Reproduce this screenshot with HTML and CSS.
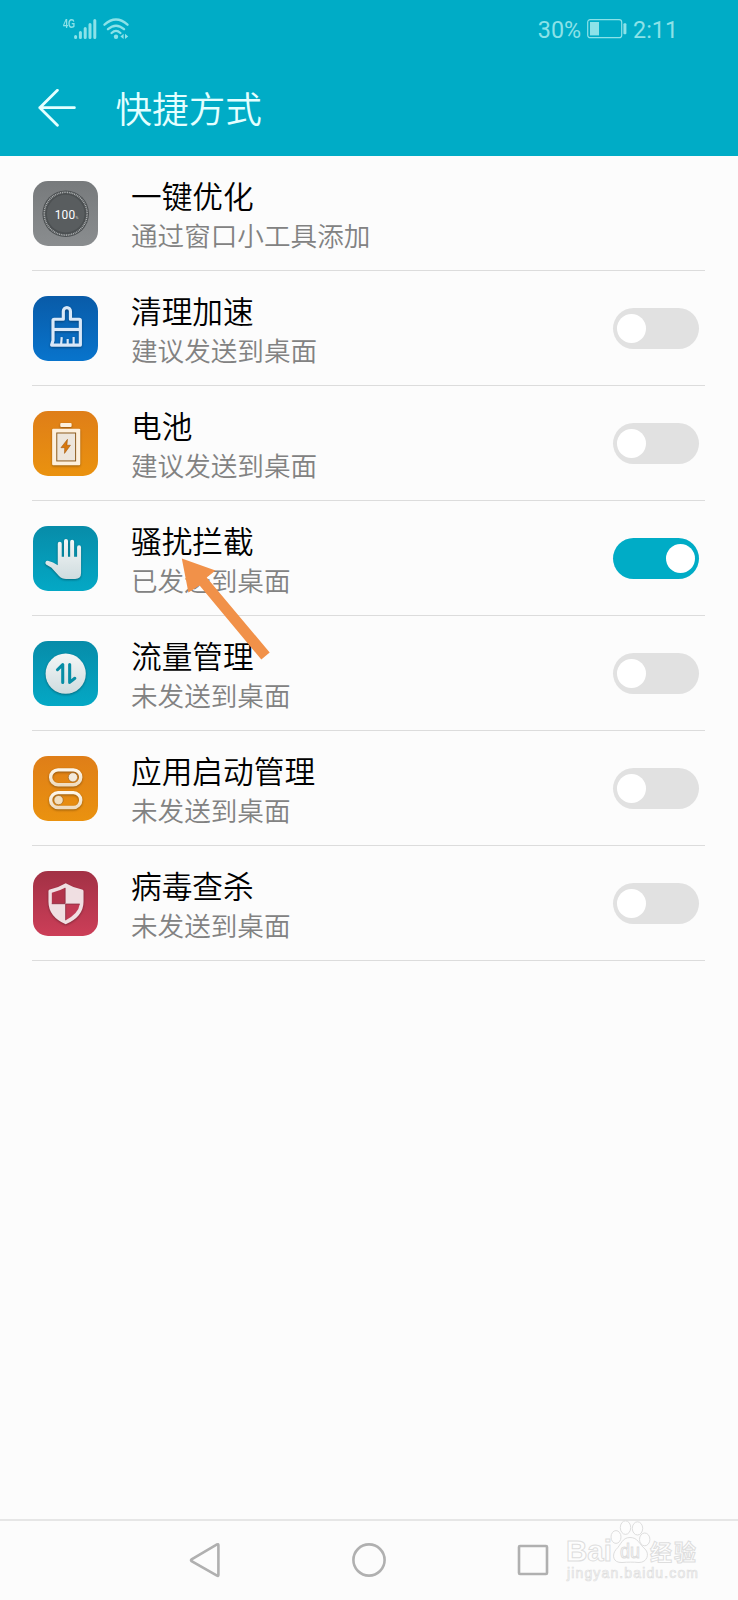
FILE: index.html
```html
<!DOCTYPE html>
<html lang="zh-CN">

<head>
    <meta charset="UTF-8" />
    <meta name="viewport" content="width=device-width, initial-scale=1.0" />
    <title>快捷方式</title>
    <link rel="stylesheet" href="styles.css">
</head>

<body>

    <header class="header">
        <div class="status-bar">
            <div class="status-left">
                <span class="network">4G</span>
                <svg class="signal" width="23" height="22" viewBox="0 0 23 22">
                    <path d="M1.6 18.4V19.4M6.4 14.5V19.4M11.2 10.5V19.4M16 6.5V19.4M20.8 2.5V19.4" fill="none" stroke="currentColor" stroke-width="3" stroke-linecap="round" />
                </svg>
                <svg class="wifi" width="26" height="22" viewBox="0 0 26 22">
                    <path d="M1.5 6.7Q13-3.6 24.5 6.7M5 11.2Q13 4.2 21 11.2M8.6 15Q13 10.8 17.4 15" fill="none" stroke="currentColor" stroke-width="2.3" stroke-linecap="round" />
                    <circle cx="13" cy="18.8" r="2.2" fill="currentColor" />
                    <path d="M20.6 15.8V21L17.4 18.4zM22 15.8V21L25.2 18.4z" fill="currentColor" />
                </svg>
            </div>
            <div class="status-right">
                <span>30%</span>
                <svg class="battery" width="41" height="20" viewBox="0 0 41 20">
                    <rect x="0.7" y="0.7" width="34" height="18" rx="2.5" fill="none" stroke="currentColor" stroke-width="1.2" />
                    <rect x="3" y="3" width="9" height="13.4" fill="currentColor" />
                    <rect x="36.4" y="4.2" width="3" height="11" rx="1" fill="currentColor" />
                </svg>
                <span>2:11</span>
            </div>
        </div>
        <div class="title-bar">
            <svg class="back" width="38" height="38" viewBox="0 0 38 38">
                <path d="M19.4 1.3L1.8 18.7L19.4 36.2M1.8 18.7H36.4" fill="none" stroke="currentColor" stroke-width="2.8" stroke-linecap="round" stroke-linejoin="round" />
            </svg>
            <h1>快捷方式</h1>
        </div>
    </header>

    <svg class="defs" width="0" height="0">
        <defs>
            <linearGradient id="silver" x1="0" y1="0" x2="0" y2="1">
                <stop offset="0" stop-color="#f4f6f6" />
                <stop offset="1" stop-color="#cfdcdf" />
            </linearGradient>
            <linearGradient id="cream" x1="0" y1="0" x2="0" y2="1">
                <stop offset="0" stop-color="#fdf6ea" />
                <stop offset="1" stop-color="#efdcc0" />
            </linearGradient>
        </defs>
    </svg>

    <main class="list">
        <div class="row">
            <svg class="icon gray" viewBox="0 0 66 66">
                <circle cx="33" cy="33" r="23.5" fill="#4c5052" />
                <circle cx="33" cy="33" r="19" fill="#595d5f" />
                <circle cx="33" cy="33" r="21.6" fill="none" stroke="#b0b3b4" stroke-width="1.6" stroke-dasharray="1 0.8" />
                <text x="22" y="38" class="score" textLength="20.5">100</text>
                <text x="43" y="38" class="score-unit">%</text>
            </svg>
            <div class="info">
                <div class="name">一键优化</div>
                <div class="desc">通过窗口小工具添加</div>
            </div>
        </div>

        <div class="row">
            <svg class="icon blue" viewBox="0 0 66 66">
                <g class="raised" fill="none" stroke="#d9e8f8" stroke-width="3.2" stroke-linejoin="round">
                    <path d="M30.6 23.5V15.4A3.6 3.6 0 0 1 37.8 15.4V23.5H46.6Q47.8 23.5 47.8 24.7V49.5H18.8L20.2 45V24.7Q20.2 23.5 21.4 23.5Z" />
                    <path d="M20.2 33.8H47.8" />
                    <path d="M29 41.5L28.4 48.5M35 43.5V48.5M41 41.5V48.5" stroke-width="2.2" />
                </g>
            </svg>
            <div class="info">
                <div class="name">清理加速</div>
                <div class="desc">建议发送到桌面</div>
            </div>
            <div class="switch"></div>
        </div>

        <div class="row">
            <svg class="icon orange" viewBox="0 0 66 66">
                <g class="raised">
                    <rect x="27.5" y="12" width="11.5" height="4.2" rx="1" fill="#fdf0dd" />
                    <rect x="19.3" y="17.8" width="28.4" height="37" rx="1.2" fill="#fdf0dd" />
                </g>
                <rect x="24" y="22.2" width="19" height="28.2" fill="#ede6dc" stroke="#8b5a1c" stroke-width="1" />
                <path d="M34.8 28.6L28.2 37H32L31.8 42.8L37.8 34.6H34.2Z" fill="#d9780c" stroke="#a05a12" stroke-width="0.6" />
            </svg>
            <div class="info">
                <div class="name">电池</div>
                <div class="desc">建议发送到桌面</div>
            </div>
            <div class="switch"></div>
        </div>

        <div class="row">
            <svg class="icon teal" viewBox="0 0 66 66">
                <path class="raised" fill="url(#silver)" d="M25 39.5V18A2 2 0 0 1 29 18V31H31.300V15A2 2 0 0 1 35.3 15V31H37.5V16A2 2 0 0 1 41.5 16V31H44.5V21.4A2 2 0 0 1 48.500 21.4V47.5Q48.5 53.5 42.5 53.5H33.5Q29 53.5 26 50.2L18.7 42.2L13.2 38.9A2.2 2.2 0 0 1 15 35.1Q20.5 36.2 25 39.5Z" />
            </svg>
            <div class="info">
                <div class="name">骚扰拦截</div>
                <div class="desc">已发送到桌面</div>
            </div>
            <div class="switch on"></div>
        </div>

        <div class="row">
            <svg class="icon teal" viewBox="0 0 66 66">
                <circle class="raised" cx="33" cy="33" r="20.3" fill="url(#silver)" />
                <path d="M24.7 29L30 23.8V41.8M37 23.8V41.8L42.2 37.6" fill="none" stroke="#078da5" stroke-width="3.1" stroke-linecap="round" stroke-linejoin="round" />
            </svg>
            <div class="info">
                <div class="name">流量管理</div>
                <div class="desc">未发送到桌面</div>
            </div>
            <div class="switch"></div>
        </div>

        <div class="row">
            <svg class="icon orange" viewBox="0 0 66 66">
                <g class="raised" fill="none" stroke="url(#cream)" stroke-width="3.4">
                    <rect x="17.8" y="14" width="30.4" height="15" rx="7.5" />
                    <rect x="17.8" y="37" width="30.4" height="15" rx="7.5" />
                </g>
                <circle cx="40.3" cy="21.5" r="4.7" fill="#f3eadc" stroke="#9c6420" stroke-width="0.7" />
                <circle cx="25.8" cy="44.5" r="4.7" fill="#f3dfbe" stroke="#9c6420" stroke-width="0.7" />
            </svg>
            <div class="info">
                <div class="name">应用启动管理</div>
                <div class="desc">未发送到桌面</div>
            </div>
            <div class="switch"></div>
        </div>

        <div class="row">
            <svg class="icon red" viewBox="0 0 66 66">
                <path class="raised" fill="#f0dfe2" d="M33 12.3Q41 17 49.5 18.7Q51 19 51 20.5V31Q51 46 33 53.8Q15.6 46 15.6 31V20.5Q15.6 19 17 18.7Q25 17 33 12.3Z" />
                <path d="M32.4 17V33H19V22Q27 20 32.4 17Z" fill="#b2344b" />
                <path d="M33 33.4H47.2Q46 43 33 49.7Z" fill="#c23a54" />
                <path d="M32.4 17V33H19M47.2 33.4H33V49.7" fill="none" stroke="#8f3045" stroke-width="0.9" />
            </svg>
            <div class="info">
                <div class="name">病毒查杀</div>
                <div class="desc">未发送到桌面</div>
            </div>
            <div class="switch"></div>
        </div>

        <svg class="pointer" width="90" height="104" viewBox="0 0 90 104">
            <path d="M0.8 0.6L34.5 12.4L25.7 19.4L88.7 94.5L80.3 101.6L18.6 27.6L7.4 34.4Z" fill="#f19149" />
        </svg>
    </main>

    <nav class="nav-bar">
        <svg class="nav-icon" width="36" height="36" viewBox="0 0 36 36">
            <path d="M32.4 3V33Q32.4 34.4 31 33.7L5.6 19.2Q4.4 18.2 5.6 17.3L31 2.5Q32.4 1.800 32.4 3Z" />
        </svg>
        <svg class="nav-icon" width="36" height="36" viewBox="0 0 36 36">
            <circle cx="18" cy="18" r="15.6" />
        </svg>
        <svg class="nav-icon" width="36" height="36" viewBox="0 0 36 36">
            <rect x="4" y="4" width="28" height="28" rx="1" />
        </svg>

        <svg class="watermark" width="140" height="66" viewBox="0 0 140 66">
            <g fill="#fdfdfd" stroke="#dedede" stroke-width="1">
                <text x="3" y="41" class="wm-logo" textLength="46" lengthAdjust="spacingAndGlyphs">Bai</text>
                <ellipse cx="53" cy="17" rx="5" ry="6.4" />
                <ellipse cx="62.5" cy="7.6" rx="5.2" ry="6.8" />
                <ellipse cx="74.5" cy="8.4" rx="5.2" ry="6.6" />
                <ellipse cx="81.7" cy="19.4" rx="5.2" ry="6.4" />
                <path d="M67 17.5C75 17.5 76 24 82 29C87 34 84 42.5 76 42.5C70 42 65 42 59 42.5C50 43 48.5 35 53 29.5C58 25 59 17.5 67 17.5Z" />
                <text x="57" y="37.5" class="wm-du" textLength="20" lengthAdjust="spacingAndGlyphs">du</text>
                <text x="87" y="39.5" class="wm-cn" textLength="46">经验</text>
                <text x="4" y="58" class="wm-url" textLength="131">jingyan.baidu.com</text>
            </g>
        </svg>
    </nav>

</body>

</html>
```
FILE: styles.css
```css
* {
    box-sizing: border-box;
}

body {
    display: flex;
    flex-direction: column;
    height: 1600px;
    margin: 0;
    overflow: hidden;
    background-color: #fcfcfc;
    font-family: "Noto Sans CJK SC", sans-serif;
    font-weight: 350;
}

.header {
    height: 156px;
    background-color: #00acc6;
    color: #e4ffff;
}

.status-bar {
    display: flex;
    justify-content: space-between;
    height: 60px;
    padding: 18px 60px 0 63px;
    color: #8ce2e8;
    font-family: Roboto, sans-serif;
    font-weight: 400;
}

.status-left {
    display: flex;
}

.network {
    width: 11px;
    font-family: "Liberation Sans", sans-serif;
    font-size: 13px;
    font-weight: bold;
    line-height: 11px;
    transform: scaleX(0.7);
    transform-origin: left;
}

.signal {
    margin-right: 6px;
}

.status-right {
    display: flex;
    font-size: 23.3px;
    line-height: 24px;
}

.battery {
    margin: 1px 5px 0 6px;
}

.title-bar {
    display: flex;
    align-items: center;
    height: 96px;
    padding: 0 0 0 37.5px;
}

.title-bar h1 {
    margin: -1px 0 0 40px;
    font-size: 36.6px;
    font-weight: 350;
    line-height: 50px;
}

.defs {
    position: absolute;
}

.list {
    position: relative;
    flex: 1;
    padding: 0 33px 0 32px;
}

.row {
    display: flex;
    align-items: center;
    height: 115px;
    border-bottom: 1px solid #dcdcdc;
}

.icon {
    width: 65.4px;
    height: 65.4px;
    margin: 1px 0 0 0.6px;
    border-radius: 15px;
}

.gray {
    background: linear-gradient(#777a7c, #8a8d8f);
}

.blue {
    background: linear-gradient(#095ba8, #0874cc);
}

.orange {
    background: linear-gradient(#df7e18, #ea920f);
}

.teal {
    background: linear-gradient(#078ca9, #04a8c5);
}

.red {
    background: linear-gradient(#a23145, #cc3e58);
}

.raised {
    filter: drop-shadow(0 1px 1px rgba(0, 0, 0, 0.35));
}

.score {
    fill: #fff;
    font-family: Roboto, sans-serif;
    font-size: 12px;
    font-weight: 400;
}

.score-unit {
    fill: #ddd;
    font-family: Roboto, sans-serif;
    font-size: 4px;
}

.info {
    flex: 1;
    margin-left: 33px;
}

.name {
    color: #000;
    font-size: 30.7px;
    line-height: 42px;
}

.desc {
    color: #828282;
    font-size: 26.6px;
    line-height: 37px;
}

.switch {
    display: flex;
    align-items: center;
    width: 86px;
    height: 41px;
    margin-right: 6px;
    padding: 0 4px;
    border-radius: 21px;
    background-color: #e1e1e1;
}

.switch::before {
    content: "";
    width: 29px;
    height: 29px;
    border-radius: 50%;
    background-color: #fff;
}

.switch.on {
    justify-content: flex-end;
    background-color: #00acc6;
}

/* arrow laid over the rows */
.pointer {
    position: absolute;
    top: 402px;
    left: 181px;
}

.nav-bar {
    position: relative;
    display: flex;
    justify-content: space-between;
    height: 81px;
    padding: 21px 187px 0 186px;
    border-top: 2px solid #e6e6e6;
}

.nav-icon {
    fill: none;
    stroke: #b0b0b0;
    stroke-width: 2.6;
}

.watermark {
    position: absolute;
    top: -1px;
    right: 35px;
}

.wm-logo {
    font: bold 29px "Liberation Sans", sans-serif;
}

.wm-du {
    font: 20px "Liberation Sans", sans-serif;
}

.wm-cn {
    font: bold 22px "Noto Sans CJK SC", sans-serif;
}

.wm-url {
    font: 14px "Liberation Sans", sans-serif;
    stroke-width: 0.7;
}
```
